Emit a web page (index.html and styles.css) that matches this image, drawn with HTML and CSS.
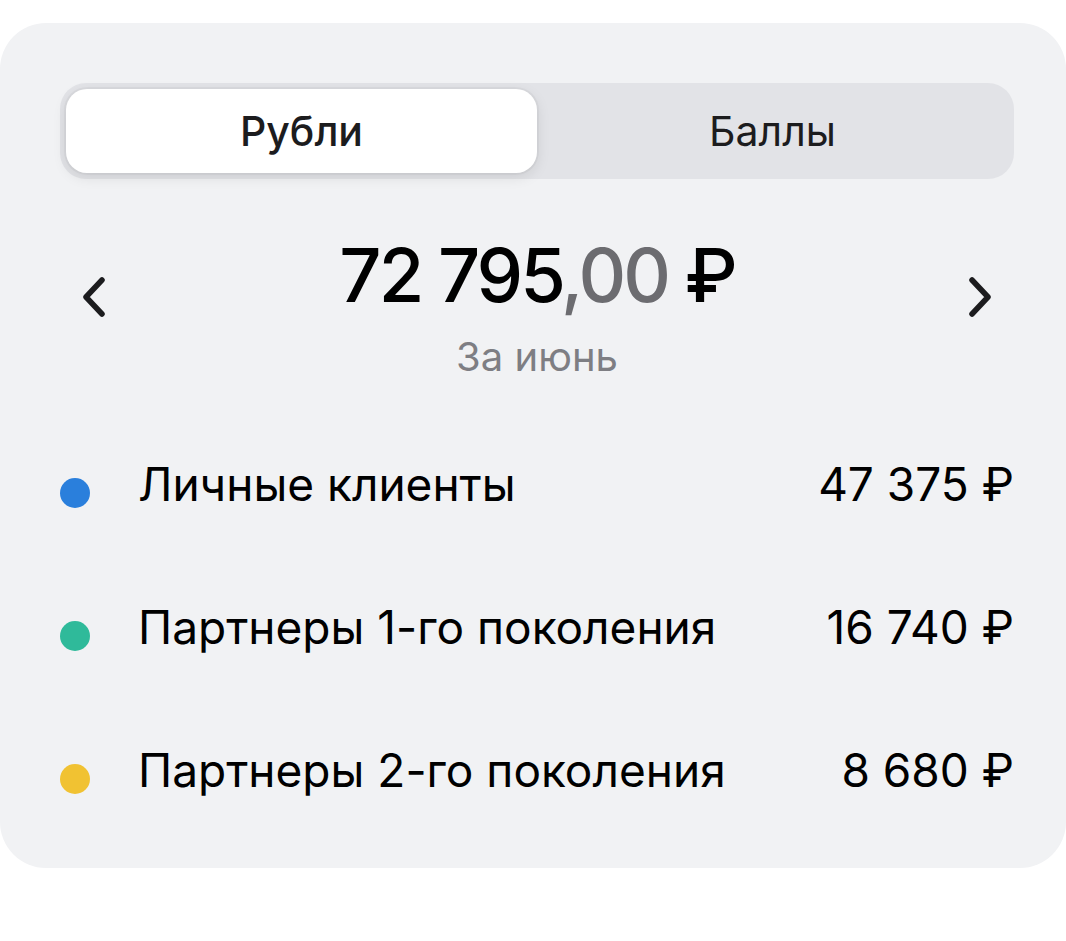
FILE: index.html
```html
<!DOCTYPE html>
<html lang="ru">
<head>
  <meta charset="UTF-8" />
  <meta name="viewport" content="width=device-width, initial-scale=1.0" />
  <title>Доход</title>
  <link rel="stylesheet" href="styles.css">
</head>
<body>
  <div class="card">
    <div class="segment">
      <div class="tab active">Рубли</div>
      <div class="tab">Баллы</div>
    </div>

    <div class="summary">
      <button class="arrow">
        <svg width="28" height="40" viewBox="0 0 28 40"><path d="M22 3 L6 20 L22 37" fill="none" stroke="#1c1c1e" stroke-width="5.5" stroke-linecap="round" stroke-linejoin="round"/></svg>
      </button>
      <div class="total">
        <div class="amount">72 795<span class="cents">,00</span> ₽</div>
        <div class="period">За июнь</div>
      </div>
      <button class="arrow">
        <svg width="28" height="40" viewBox="0 0 28 40"><path d="M6 3 L22 20 L6 37" fill="none" stroke="#1c1c1e" stroke-width="5.5" stroke-linecap="round" stroke-linejoin="round"/></svg>
      </button>
    </div>

    <ul class="legend">
      <li class="row"><span class="dot blue"></span><span class="name">Личные клиенты</span><span class="value">47 375 ₽</span></li>
      <li class="row"><span class="dot green"></span><span class="name">Партнеры 1-го поколения</span><span class="value">16 740 ₽</span></li>
      <li class="row"><span class="dot yellow"></span><span class="name">Партнеры 2-го поколения</span><span class="value">8 680 ₽</span></li>
    </ul>
  </div>
</body>
</html>
```

FILE: styles.css
```css
html, body {
  margin: 0;
  padding: 0;
  background: #fff;
  font-family: Inter, 'Noto Sans', sans-serif;
  color: #000;
}
.card {
  margin-top: 23px;
  height: 845px;
  box-sizing: border-box;
  padding: 60px 52px 0 60px;
  background: #f1f2f4;
  border-radius: 46px;
}
.segment {
  display: flex;
  height: 96px;
  padding: 6px;
  box-sizing: border-box;
  background: #e2e3e7;
  border-radius: 26px;
}
.tab {
  flex: 1;
  display: flex;
  align-items: center;
  justify-content: center;
  font-size: 41px;
  color: #1c1c1e;
  border-radius: 21px;
}
.tab.active {
  background: #fff;
  font-weight: 500;
  box-shadow: 0 4px 14px rgba(0,0,0,0.10), 0 0 0 2px rgba(0,0,0,0.03);
}
.summary {
  display: flex;
  align-items: flex-start;
  justify-content: space-between;
  margin-top: 54px;
}
.arrow {
  border: none;
  background: none;
  padding: 0;
  margin-top: 44px;
  cursor: pointer;
}
.arrow:first-child {
  margin-left: 20px;
}
.arrow:last-child {
  margin-right: 20px;
}
.total {
  text-align: center;
}
.amount {
  font-size: 74px;
  font-weight: 500;
  line-height: 84px;
  letter-spacing: -3px;
}
.cents {
  color: #6c6c70;
}
.period {
  margin-top: 15px;
  font-size: 40px;
  color: #7e7e83;
}
.legend {
  list-style: none;
  margin: 31px 0 0;
  padding: 0;
}
.row {
  display: flex;
  align-items: center;
  height: 143px;
  font-size: 46px;
}
.dot {
  width: 30px;
  height: 30px;
  border-radius: 50%;
  margin: 18px 48px 0 0;
  flex-shrink: 0;
}
.blue { background: #2a7fdc; }
.green { background: #2fba9a; }
.yellow { background: #f1c232; }
.name {
  flex: 1;
}
.value {
  text-align: right;
}
```
